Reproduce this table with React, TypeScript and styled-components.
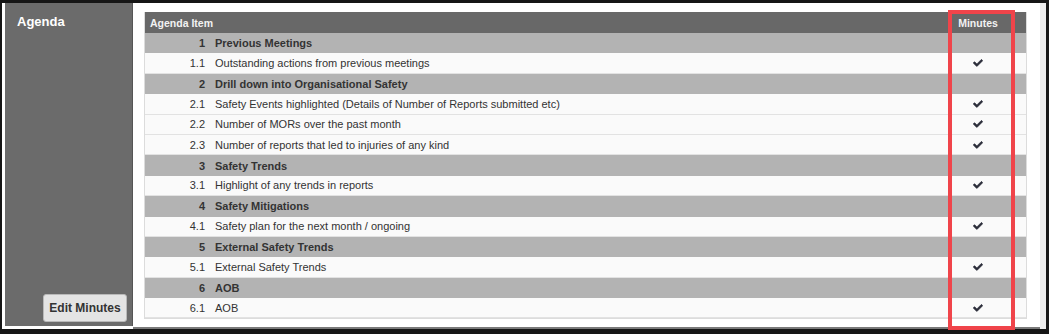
import React from "react";
import styled, { createGlobalStyle } from "styled-components";

const Global = createGlobalStyle`
  html, body { margin: 0; padding: 0; background: #fff; }
  body { font-family: "Liberation Sans", Arial, sans-serif; }
`;

const Frame = styled.div`
  position: relative;
  width: 1049px;
  height: 334px;
  box-sizing: border-box;
  background: #161616;
  padding: 3px 3px 5px 2px;
  display: flex;
`;

const Inner = styled.div`
  flex: 1;
  display: flex;
  background: #fff;
  padding-left: 3px;
`;

const Sidebar = styled.aside`
  width: 128px;
  height: 323px;
  box-sizing: border-box;
  background: #6b6b6b;
  border-right: 1px solid #555;
  padding: 11px 5px 4px 12px;
  display: flex;
  flex-direction: column;
  justify-content: space-between;
  align-items: flex-start;
`;

const SideTitle = styled.div`
  color: #fff;
  font-weight: bold;
  font-size: 13px;
  line-height: 16px;
`;

const EditButton = styled.button`
  align-self: flex-end;
  width: 84px;
  height: 28px;
  background: #e4e4e4;
  border: 1px solid #b9b9b9;
  border-radius: 3px;
  color: #333;
  font-family: "Liberation Sans", Arial, sans-serif;
  font-weight: bold;
  font-size: 12px;
  padding: 0;
`;

const Main = styled.main`
  flex: 1;
  background: #fff;
  border-bottom: 2px solid #7a7a7a;
  padding: 9px 12px 0 11px;
  box-sizing: border-box;
`;

const RightStrip = styled.div`
  width: 6px;
  background: #ececec;
`;

const Table = styled.div`
  width: 883px;
  border: 1px solid #dcdcdc;
  border-top: none;
  box-sizing: border-box;
`;

const Row = styled.div<{ $kind: "head" | "section" | "item" }>`
  display: grid;
  grid-template-columns: 62px 1fr 96px;
  align-items: center;
  box-sizing: border-box;
  height: ${(p) => (p.$kind === "head" ? "21px" : "20.4px")};
  font-size: ${(p) => (p.$kind === "head" ? "10.5px" : "11px")};
  font-weight: ${(p) => (p.$kind === "item" ? "normal" : "bold")};
  background: ${(p) =>
    p.$kind === "head" ? "#686868" : p.$kind === "section" ? "#b3b3b3" : "#fafafa"};
  color: ${(p) => (p.$kind === "head" ? "#f2f2f2" : "#333")};
  border-bottom: ${(p) => (p.$kind === "item" ? "1px solid #e2e2e2" : "none")};
`;

const HeadLabel = styled.div`
  grid-column: 1 / 3;
  padding-left: 5px;
`;

const Num = styled.div`
  text-align: right;
  padding-right: 2px;
`;

const Label = styled.div`
  padding-left: 8px;
  white-space: nowrap;
`;

const MinutesCell = styled.div`
  display: flex;
  justify-content: center;
  align-items: center;
`;

const Highlight = styled.div`
  position: absolute;
  left: 948px;
  top: 10px;
  width: 67px;
  height: 320px;
  box-sizing: border-box;
  border: 4px solid #f0444a;
  pointer-events: none;
`;

const Check = () => (
  <svg width="10" height="8" viewBox="0 0 512 410" aria-hidden>
    <path
      fill="#2b2d3a"
      stroke="#2b2d3a"
      strokeWidth="40"
      strokeLinejoin="round"
      d="M173.898 419.404l-166.4-166.4c-9.997-9.997-9.997-26.206 0-36.204l36.203-36.204c9.997-9.998 26.207-9.998 36.204 0L192 292.69 432.095 52.596c9.997-9.997 26.207-9.997 36.204 0l36.203 36.204c9.997 9.997 9.997 26.206 0 36.204l-294.4 294.401c-9.998 9.997-26.207 9.997-36.204-.001z"
      transform="translate(20 -15) scale(0.92)"
    />
  </svg>
);

type Item = { num: string; text: string; section: boolean };

const items: Item[] = [
  { num: "1", text: "Previous Meetings", section: true },
  { num: "1.1", text: "Outstanding actions from previous meetings", section: false },
  { num: "2", text: "Drill down into Organisational Safety", section: true },
  { num: "2.1", text: "Safety Events highlighted (Details of Number of Reports submitted etc)", section: false },
  { num: "2.2", text: "Number of MORs over the past month", section: false },
  { num: "2.3", text: "Number of reports that led to injuries of any kind", section: false },
  { num: "3", text: "Safety Trends", section: true },
  { num: "3.1", text: "Highlight of any trends in reports", section: false },
  { num: "4", text: "Safety Mitigations", section: true },
  { num: "4.1", text: "Safety plan for the next month / ongoing", section: false },
  { num: "5", text: "External Safety Trends", section: true },
  { num: "5.1", text: "External Safety Trends", section: false },
  { num: "6", text: "AOB", section: true },
  { num: "6.1", text: "AOB", section: false },
];

export default function App() {
  return (
    <>
      <Global />
      <Frame>
        <Inner>
          <Sidebar>
            <SideTitle>Agenda</SideTitle>
            <EditButton>Edit Minutes</EditButton>
          </Sidebar>
          <Main>
            <Table>
              <Row $kind="head">
                <HeadLabel>Agenda Item</HeadLabel>
                <MinutesCell>Minutes</MinutesCell>
              </Row>
              {items.map((it) => (
                <Row key={it.num} $kind={it.section ? "section" : "item"}>
                  <Num>{it.num}</Num>
                  <Label>{it.text}</Label>
                  <MinutesCell>{it.section ? null : <Check />}</MinutesCell>
                </Row>
              ))}
            </Table>
          </Main>
          <RightStrip />
        </Inner>
        <Highlight />
      </Frame>
    </>
  );
}
